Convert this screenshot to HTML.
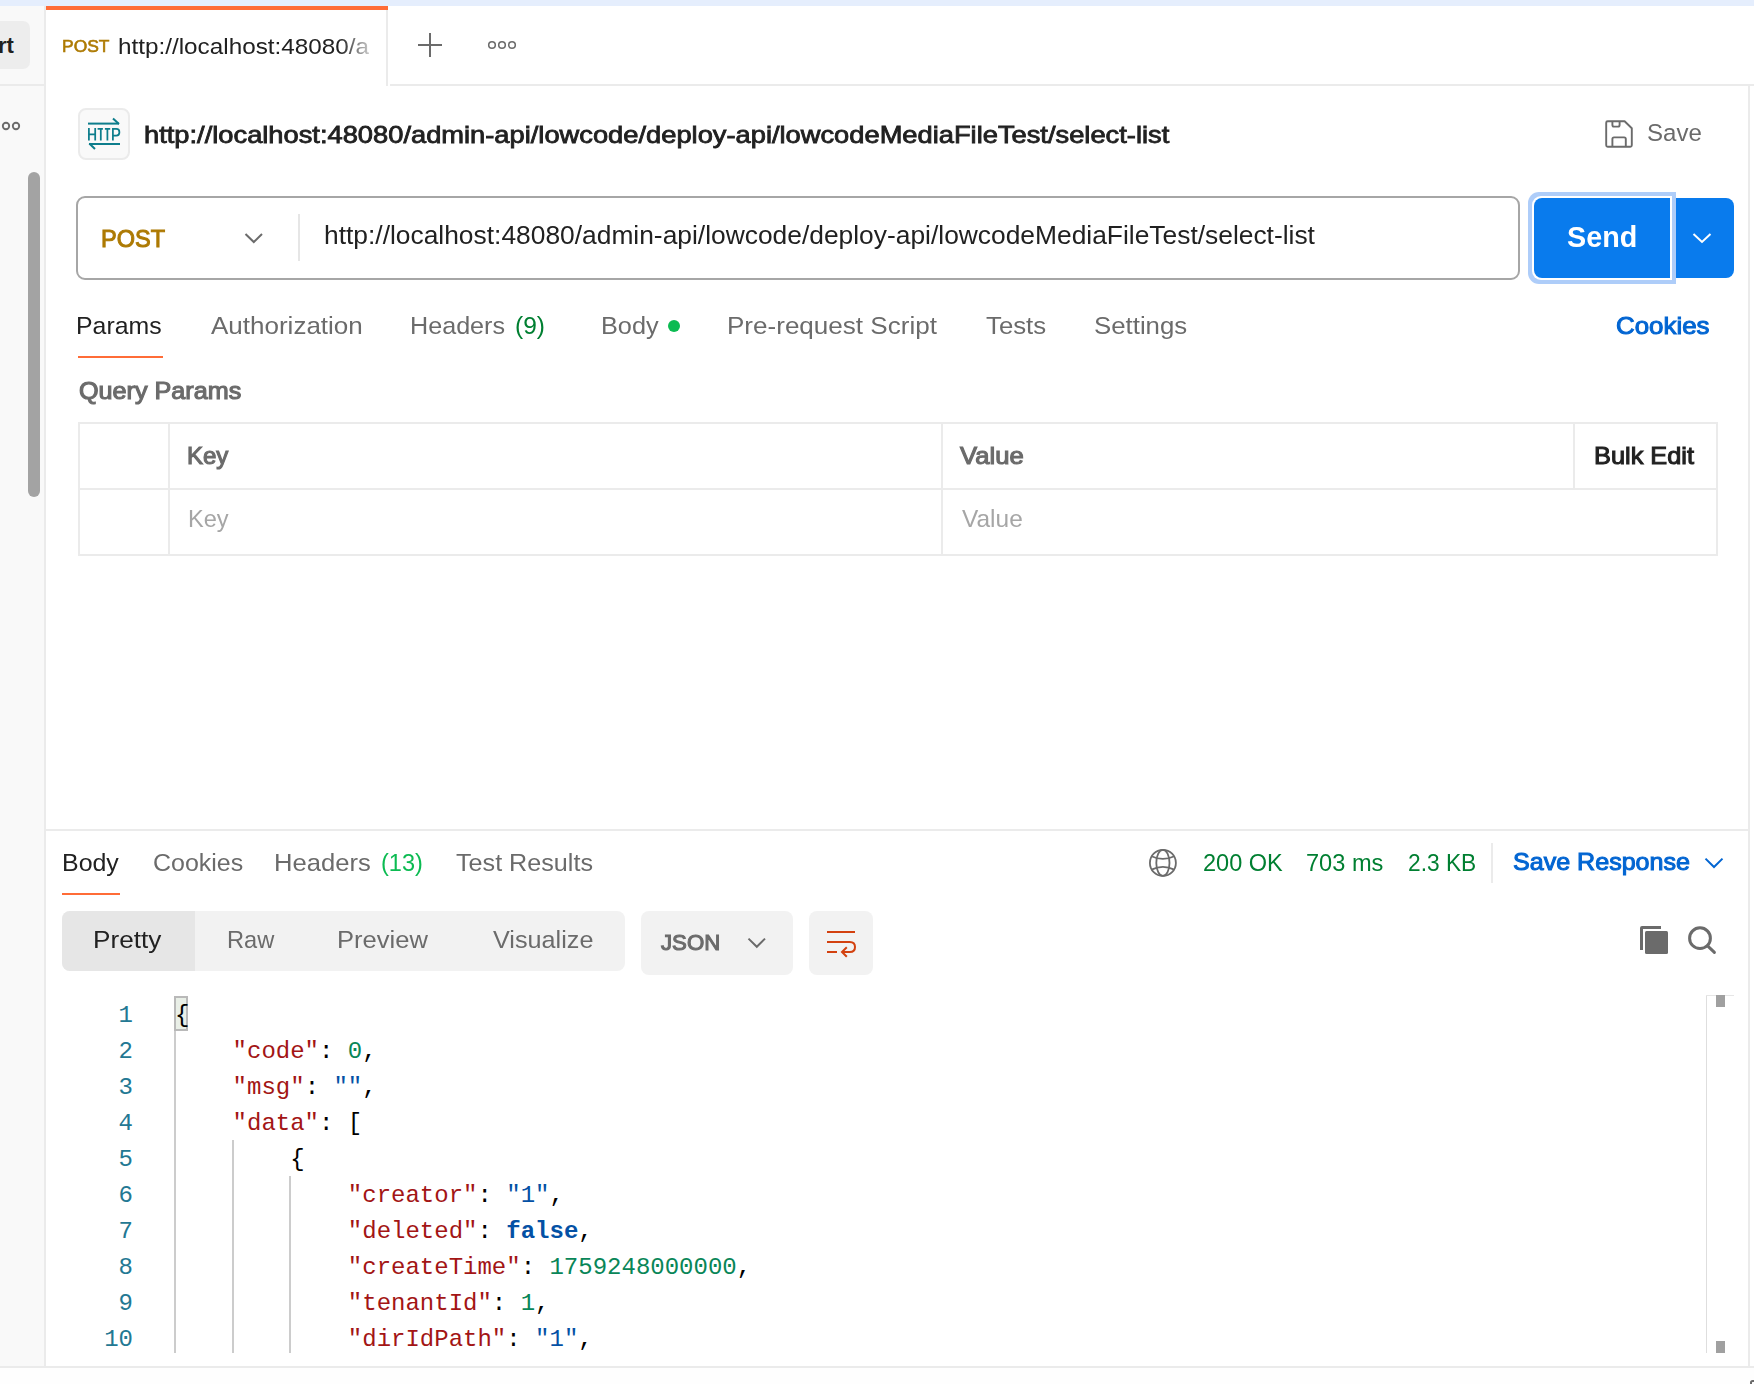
<!DOCTYPE html>
<html><head><meta charset="utf-8"><title>Postman</title>
<style>
html,body{margin:0;padding:0}
body{width:1754px;height:1384px;overflow:hidden;position:relative;background:#fff;font-family:'Liberation Sans', sans-serif}
body>div,body>svg{position:absolute}
b{font-weight:700}
</style></head><body>
<div style="left:0px;top:0px;width:1754px;height:6px;background:#e5eefd"></div>
<div style="left:0px;top:6px;width:44px;height:1360px;background:#f9f9f9"></div>
<div style="left:44px;top:6px;width:2px;height:1362px;background:#ebebeb"></div>
<div style="left:0px;top:84px;width:44px;height:2px;background:#ebebeb"></div>
<div style="left:-20px;top:21px;width:50px;height:48px;background:#ededed;border-radius:7px"></div>
<div style="left:-2.00px;top:34.72px;font-family:'Liberation Sans', sans-serif;font-size:22px;line-height:22px;color:#212121;font-weight:700;letter-spacing:0px;white-space:pre;">rt</div>
<svg style="left:0;top:118px" width="30" height="16"><circle cx="6" cy="8" r="3.2" fill="none" stroke="#6b6b6b" stroke-width="1.9"/><circle cx="16" cy="8" r="3.2" fill="none" stroke="#6b6b6b" stroke-width="1.9"/></svg>
<div style="left:28px;top:172px;width:12px;height:325px;background:#a3a3a3;border-radius:6px"></div>
<div style="left:46px;top:6px;width:342px;height:4px;background:#ff6c37"></div>
<div style="left:386px;top:10px;width:2px;height:76px;background:#ebebeb"></div>
<div style="left:390px;top:84px;width:1364px;height:2px;background:#ebebeb"></div>
<div style="left:61.79px;top:38.27px;font-family:'Liberation Sans', sans-serif;font-size:17.3px;line-height:17.3px;color:#ad7a03;font-weight:400;white-space:pre;transform-origin:0 0;transform:scaleX(1.0087);-webkit-text-stroke:0.6px #ad7a03;">POST</div>
<div style="left:117.52px;top:36.08px;font-family:'Liberation Sans', sans-serif;font-size:22.4px;line-height:22.4px;color:#212121;font-weight:400;white-space:pre;transform-origin:0 0;transform:scaleX(1.0840);-webkit-mask-image:linear-gradient(to right,#000 205px,transparent 240px);">http://localhost:48080/a</div>
<svg style="left:416px;top:31px" width="28" height="28"><path d="M14 2V26M2 14H26" stroke="#6b6b6b" stroke-width="2" fill="none"/></svg>
<svg style="left:482px;top:37px" width="40" height="16"><g fill="none" stroke="#6b6b6b" stroke-width="1.55"><circle cx="10" cy="8" r="3.3"/><circle cx="20" cy="8" r="3.3"/><circle cx="30" cy="8" r="3.3"/></g></svg>
<div style="left:1748px;top:86px;width:2px;height:1282px;background:#ebebeb"></div>
<div style="left:78px;top:108px;width:52px;height:52px;background:#f9f9f9;border:2px solid #ebebeb;border-radius:8px;box-sizing:border-box"></div>
<svg style="left:75px;top:105px" width="60" height="60" viewBox="75 105 60 60"><g fill="none" stroke="#0d7d8c" stroke-width="2" stroke-linecap="butt"><path d="M88 123.6H119"/><path d="M113 118.6L119 124"/><path d="M89 144H120"/><path d="M89.3 143.6L95 149"/><g stroke-width="1.75"><path d="M88.9 128V140.5M95.2 128V140.5M88.9 134.4H95.2"/><path d="M97.6 128.9H102.9M100.8 128.9V140.5"/><path d="M104.9 128.9H110.2M107.4 128.9V140.5"/><path d="M112.9 140.5V128.9H116.3Q119.4 128.9 119.4 132.2Q119.4 135.5 116.3 135.5H112.9"/></g></g></svg>
<div style="left:144.02px;top:123.51px;font-family:'Liberation Sans', sans-serif;font-size:23.2px;line-height:23.2px;color:#212121;font-weight:400;white-space:pre;transform-origin:0 0;transform:scaleX(1.1767);-webkit-text-stroke:0.8px #212121;">http://localhost:48080/admin-api/lowcode/deploy-api/lowcodeMediaFileTest/select-list</div>
<svg style="left:1600px;top:115px" width="38" height="38" viewBox="1600 115 38 38"><g fill="none" stroke="#6b6b6b" stroke-width="1.9" stroke-linejoin="round"><path d="M1607.7 121.2H1624.6L1631.8 128.2V145.3Q1631.8 146.8 1630.3 146.8H1607.7Q1606.2 146.8 1606.2 145.3V122.7Q1606.2 121.2 1607.7 121.2Z"/><path d="M1612.4 121.2V125Q1612.4 126.6 1614 126.6H1618Q1619.6 126.6 1619.6 125V121.2"/><path d="M1612.4 146.8V139Q1612.4 137.4 1614 137.4H1624.2Q1625.8 137.4 1625.8 139V146.8"/></g></svg>
<div style="left:1647.18px;top:121.79px;font-family:'Liberation Sans', sans-serif;font-size:23.7px;line-height:23.7px;color:#6b6b6b;font-weight:400;white-space:pre;transform-origin:0 0;transform:scaleX(1.0154);">Save</div>
<div style="left:76px;top:196px;width:1444px;height:84px;border:2px solid #a6a6a6;border-radius:9px;box-sizing:border-box;background:#fff"></div>
<div style="left:100.53px;top:227.19px;font-family:'Liberation Sans', sans-serif;font-size:24.3px;line-height:24.3px;color:#ad7a03;font-weight:400;white-space:pre;transform-origin:0 0;transform:scaleX(0.9677);-webkit-text-stroke:1.0px #ad7a03;">POST</div>
<svg style="left:240px;top:228px" width="28" height="20"><path d="M5.5 6L13.8 14L22 6" fill="none" stroke="#6b6b6b" stroke-width="2"/></svg>
<div style="left:298px;top:214px;width:2px;height:47px;background:#e6e6e6"></div>
<div style="left:323.62px;top:222.75px;font-family:'Liberation Sans', sans-serif;font-size:25.3px;line-height:25.3px;color:#212121;font-weight:400;white-space:pre;transform-origin:0 0;transform:scaleX(1.0425);">http://localhost:48080/admin-api/lowcode/deploy-api/lowcodeMediaFileTest/select-list</div>
<div style="left:1528px;top:192px;width:148px;height:92px;background:#aecdf9;border-radius:11px 0 0 11px"></div>
<div style="left:1532px;top:196px;width:140px;height:84px;background:#fff;border-radius:9px 0 0 9px"></div>
<div style="left:1534px;top:198px;width:136px;height:80px;background:#097bed;border-radius:8px 0 0 8px"></div>
<div style="left:1676px;top:198px;width:58px;height:80px;background:#097bed;border-radius:0 8px 8px 0"></div>
<div style="left:1567.01px;top:223.04px;font-family:'Liberation Sans', sans-serif;font-size:29px;line-height:29px;color:#fff;font-weight:700;white-space:pre;transform-origin:0 0;transform:scaleX(0.9912);">Send</div>
<svg style="left:1690px;top:228px" width="26" height="20"><path d="M3.5 6L12 14L20.5 6" fill="none" stroke="#fff" stroke-width="2"/></svg>
<div style="left:76.46px;top:313.50px;font-family:'Liberation Sans', sans-serif;font-size:24.4px;line-height:24.4px;color:#212121;font-weight:400;white-space:pre;transform-origin:0 0;transform:scaleX(1.0185);">Params</div>
<div style="left:211.00px;top:313.50px;font-family:'Liberation Sans', sans-serif;font-size:24.4px;line-height:24.4px;color:#6b6b6b;font-weight:400;white-space:pre;transform-origin:0 0;transform:scaleX(1.0660);">Authorization</div>
<div style="left:409.84px;top:313.50px;font-family:'Liberation Sans', sans-serif;font-size:24.4px;line-height:24.4px;color:#6b6b6b;font-weight:400;white-space:pre;transform-origin:0 0;transform:scaleX(1.0311);">Headers</div>
<div style="left:600.93px;top:313.50px;font-family:'Liberation Sans', sans-serif;font-size:24.4px;line-height:24.4px;color:#6b6b6b;font-weight:400;white-space:pre;transform-origin:0 0;transform:scaleX(1.0370);">Body</div>
<div style="left:727.26px;top:313.50px;font-family:'Liberation Sans', sans-serif;font-size:24.4px;line-height:24.4px;color:#6b6b6b;font-weight:400;white-space:pre;transform-origin:0 0;transform:scaleX(1.0680);">Pre-request Script</div>
<div style="left:985.80px;top:313.50px;font-family:'Liberation Sans', sans-serif;font-size:24.4px;line-height:24.4px;color:#6b6b6b;font-weight:400;white-space:pre;transform-origin:0 0;transform:scaleX(1.0571);">Tests</div>
<div style="left:1093.94px;top:313.50px;font-family:'Liberation Sans', sans-serif;font-size:24.4px;line-height:24.4px;color:#6b6b6b;font-weight:400;white-space:pre;transform-origin:0 0;transform:scaleX(1.0575);">Settings</div>
<div style="left:515.10px;top:313.50px;font-family:'Liberation Sans', sans-serif;font-size:24.4px;line-height:24.4px;color:#007f31;font-weight:400;white-space:pre;transform-origin:0 0;transform:scaleX(1.0036);">(9)</div>
<svg style="left:664px;top:316px" width="20" height="20"><circle cx="10" cy="10" r="6" fill="#0cbb52"/></svg>
<div style="left:1616.00px;top:314.68px;font-family:'Liberation Sans', sans-serif;font-size:23.6px;line-height:23.6px;color:#0265d2;font-weight:400;white-space:pre;transform-origin:0 0;transform:scaleX(1.0964);-webkit-text-stroke:1.0px #0265d2;">Cookies</div>
<div style="left:78px;top:356px;width:85px;height:2px;background:#ff6c37"></div>
<div style="left:78.50px;top:380.14px;font-family:'Liberation Sans', sans-serif;font-size:23.4px;line-height:23.4px;color:#6b6b6b;font-weight:400;white-space:pre;transform-origin:0 0;transform:scaleX(1.0762);-webkit-text-stroke:1.1px #6b6b6b;">Query Params</div>
<div style="left:78px;top:422px;width:1640px;height:134px;border:2px solid #ebebeb;box-sizing:border-box"></div>
<div style="left:78px;top:488px;width:1640px;height:2px;background:#ebebeb"></div>
<div style="left:168px;top:422px;width:2px;height:134px;background:#ebebeb"></div>
<div style="left:941px;top:422px;width:2px;height:134px;background:#ebebeb"></div>
<div style="left:1573px;top:422px;width:2px;height:68px;background:#ebebeb"></div>
<div style="left:186.58px;top:444.98px;font-family:'Liberation Sans', sans-serif;font-size:23.6px;line-height:23.6px;color:#6b6b6b;font-weight:400;white-space:pre;transform-origin:0 0;transform:scaleX(1.0175);-webkit-text-stroke:1.1px #6b6b6b;">Key</div>
<div style="left:959.90px;top:444.98px;font-family:'Liberation Sans', sans-serif;font-size:23.6px;line-height:23.6px;color:#6b6b6b;font-weight:400;white-space:pre;transform-origin:0 0;transform:scaleX(1.0862);-webkit-text-stroke:1.1px #6b6b6b;">Value</div>
<div style="left:1594.43px;top:444.98px;font-family:'Liberation Sans', sans-serif;font-size:23.6px;line-height:23.6px;color:#212121;font-weight:400;white-space:pre;transform-origin:0 0;transform:scaleX(1.0742);-webkit-text-stroke:1.0px #212121;">Bulk Edit</div>
<div style="left:188.16px;top:506.50px;font-family:'Liberation Sans', sans-serif;font-size:24.4px;line-height:24.4px;color:#a6a6a6;font-weight:400;white-space:pre;transform-origin:0 0;transform:scaleX(0.9675);">Key</div>
<div style="left:961.80px;top:506.50px;font-family:'Liberation Sans', sans-serif;font-size:24.4px;line-height:24.4px;color:#a6a6a6;font-weight:400;white-space:pre;transform-origin:0 0;transform:scaleX(1.0033);">Value</div>
<div style="left:46px;top:829px;width:1702px;height:2px;background:#ebebeb"></div>
<div style="left:61.86px;top:850.50px;font-family:'Liberation Sans', sans-serif;font-size:24.4px;line-height:24.4px;color:#212121;font-weight:400;white-space:pre;transform-origin:0 0;transform:scaleX(1.0222);">Body</div>
<div style="left:152.58px;top:850.50px;font-family:'Liberation Sans', sans-serif;font-size:24.4px;line-height:24.4px;color:#6b6b6b;font-weight:400;white-space:pre;transform-origin:0 0;transform:scaleX(1.0230);">Cookies</div>
<div style="left:274.30px;top:850.50px;font-family:'Liberation Sans', sans-serif;font-size:24.4px;line-height:24.4px;color:#6b6b6b;font-weight:400;white-space:pre;transform-origin:0 0;transform:scaleX(1.0489);">Headers</div>
<div style="left:380.53px;top:850.50px;font-family:'Liberation Sans', sans-serif;font-size:24.4px;line-height:24.4px;color:#0cbb52;font-weight:400;white-space:pre;transform-origin:0 0;transform:scaleX(0.9659);">(13)</div>
<div style="left:456.00px;top:850.50px;font-family:'Liberation Sans', sans-serif;font-size:24.4px;line-height:24.4px;color:#6b6b6b;font-weight:400;white-space:pre;transform-origin:0 0;transform:scaleX(1.0311);">Test Results</div>
<div style="left:62px;top:893px;width:58px;height:2px;background:#ff6c37"></div>
<svg style="left:1145px;top:845px" width="36" height="36" viewBox="1145 845 36 36"><g fill="none" stroke="#6b6b6b" stroke-width="1.8"><circle cx="1162.9" cy="862.9" r="13"/><ellipse cx="1162.9" cy="862.9" rx="6.6" ry="13"/><path d="M1151.5 856.2Q1162.9 861.6 1174.3 856.2"/><path d="M1151.5 869.6Q1162.9 864.2 1174.3 869.6"/></g></svg>
<div style="left:1202.80px;top:852.26px;font-family:'Liberation Sans', sans-serif;font-size:23.5px;line-height:23.5px;color:#007f31;font-weight:400;white-space:pre;transform-origin:0 0;transform:scaleX(1.0013);">200 OK</div>
<div style="left:1306.20px;top:852.26px;font-family:'Liberation Sans', sans-serif;font-size:23.5px;line-height:23.5px;color:#007f31;font-weight:400;white-space:pre;transform-origin:0 0;transform:scaleX(1.0040);">703 ms</div>
<div style="left:1407.53px;top:852.26px;font-family:'Liberation Sans', sans-serif;font-size:23.5px;line-height:23.5px;color:#007f31;font-weight:400;white-space:pre;transform-origin:0 0;transform:scaleX(0.9676);">2.3 KB</div>
<div style="left:1491px;top:843px;width:2px;height:40px;background:#ebebeb"></div>
<div style="left:1513.04px;top:851.18px;font-family:'Liberation Sans', sans-serif;font-size:23.6px;line-height:23.6px;color:#0265d2;font-weight:400;white-space:pre;transform-origin:0 0;transform:scaleX(1.0624);-webkit-text-stroke:1.0px #0265d2;">Save Response</div>
<svg style="left:1700px;top:850px" width="28" height="24"><path d="M5.5 8.6L14 17L22.5 8.6" fill="none" stroke="#0265d2" stroke-width="2"/></svg>
<div style="left:62px;top:911px;width:563px;height:60px;background:#f2f2f2;border-radius:8px"></div>
<div style="left:62px;top:911px;width:133px;height:60px;background:#e6e6e6;border-radius:8px 0 0 8px"></div>
<div style="left:92.85px;top:928.30px;font-family:'Liberation Sans', sans-serif;font-size:24.4px;line-height:24.4px;color:#212121;font-weight:400;white-space:pre;transform-origin:0 0;transform:scaleX(1.0726);">Pretty</div>
<div style="left:226.56px;top:928.30px;font-family:'Liberation Sans', sans-serif;font-size:24.4px;line-height:24.4px;color:#6b6b6b;font-weight:400;white-space:pre;transform-origin:0 0;transform:scaleX(0.9702);">Raw</div>
<div style="left:337.21px;top:928.30px;font-family:'Liberation Sans', sans-serif;font-size:24.4px;line-height:24.4px;color:#6b6b6b;font-weight:400;white-space:pre;transform-origin:0 0;transform:scaleX(1.0471);">Preview</div>
<div style="left:493.30px;top:928.30px;font-family:'Liberation Sans', sans-serif;font-size:24.4px;line-height:24.4px;color:#6b6b6b;font-weight:400;white-space:pre;transform-origin:0 0;transform:scaleX(1.0333);">Visualize</div>
<div style="left:641px;top:911px;width:152px;height:64px;background:#f2f2f2;border-radius:8px"></div>
<div style="left:661.40px;top:932.32px;font-family:'Liberation Sans', sans-serif;font-size:22.6px;line-height:22.6px;color:#6b6b6b;font-weight:400;white-space:pre;transform-origin:0 0;transform:scaleX(0.9831);-webkit-text-stroke:1.1px #6b6b6b;">JSON</div>
<svg style="left:744px;top:932px" width="28" height="22"><path d="M4.5 6.6L12.8 14.8L21 6.6" fill="none" stroke="#6b6b6b" stroke-width="2"/></svg>
<div style="left:809px;top:911px;width:64px;height:64px;background:#f2f2f2;border-radius:8px"></div>
<svg style="left:809px;top:911px" width="64" height="64" viewBox="809 911 64 64"><g fill="none" stroke="#d3410f" stroke-width="2"><path d="M827 932H855"/><path d="M827 942H849.8Q855 942 855 947Q855 952 849.8 952H842.5"/><path d="M846.8 947.3L842 952L846.8 956.8"/><path d="M827 952H837"/></g></svg>
<svg style="left:1636px;top:922px" width="36" height="36" viewBox="1636 922 36 36"><g fill="#6b6b6b"><path d="M1640 934V928Q1640 926 1642 926H1661V929H1643V950H1640Z"/><rect x="1645" y="931" width="23" height="23" rx="1.5"/></g></svg>
<svg style="left:1682px;top:920px" width="40" height="40" viewBox="1682 920 40 40"><g fill="none" stroke="#6b6b6b" stroke-width="3" stroke-linecap="round"><circle cx="1700" cy="938.2" r="10.4"/><path d="M1707.6 945.8L1714.4 952.4"/></g></svg>
<div style="left:174px;top:995.5px;width:14px;height:35px;background:#e9efe7;border:2px solid #b9b9b9;box-sizing:border-box"></div>
<div style="left:118.60px;top:1004.02px;font-family:'Liberation Mono', monospace;font-size:24px;line-height:24px;color:#237893;font-weight:400;letter-spacing:0px;white-space:pre;">1</div>
<div style="left:175.00px;top:1004.02px;font-family:'Liberation Mono', monospace;font-size:24px;line-height:24px;color:#000000;font-weight:400;letter-spacing:0px;white-space:pre;"><span style="color:#000000">{</span></div>
<div style="left:118.60px;top:1040.02px;font-family:'Liberation Mono', monospace;font-size:24px;line-height:24px;color:#237893;font-weight:400;letter-spacing:0px;white-space:pre;">2</div>
<div style="left:175.00px;top:1040.02px;font-family:'Liberation Mono', monospace;font-size:24px;line-height:24px;color:#000000;font-weight:400;letter-spacing:0px;white-space:pre;"><span style="color:#000000">    </span><span style="color:#a31515">"code"</span><span style="color:#000000">: </span><span style="color:#098658">0</span><span style="color:#000000">,</span></div>
<div style="left:118.60px;top:1076.02px;font-family:'Liberation Mono', monospace;font-size:24px;line-height:24px;color:#237893;font-weight:400;letter-spacing:0px;white-space:pre;">3</div>
<div style="left:175.00px;top:1076.02px;font-family:'Liberation Mono', monospace;font-size:24px;line-height:24px;color:#000000;font-weight:400;letter-spacing:0px;white-space:pre;"><span style="color:#000000">    </span><span style="color:#a31515">"msg"</span><span style="color:#000000">: </span><span style="color:#0451a5">""</span><span style="color:#000000">,</span></div>
<div style="left:118.60px;top:1112.02px;font-family:'Liberation Mono', monospace;font-size:24px;line-height:24px;color:#237893;font-weight:400;letter-spacing:0px;white-space:pre;">4</div>
<div style="left:175.00px;top:1112.02px;font-family:'Liberation Mono', monospace;font-size:24px;line-height:24px;color:#000000;font-weight:400;letter-spacing:0px;white-space:pre;"><span style="color:#000000">    </span><span style="color:#a31515">"data"</span><span style="color:#000000">: </span><span style="color:#000000">[</span></div>
<div style="left:118.60px;top:1148.02px;font-family:'Liberation Mono', monospace;font-size:24px;line-height:24px;color:#237893;font-weight:400;letter-spacing:0px;white-space:pre;">5</div>
<div style="left:175.00px;top:1148.02px;font-family:'Liberation Mono', monospace;font-size:24px;line-height:24px;color:#000000;font-weight:400;letter-spacing:0px;white-space:pre;"><span style="color:#000000">        </span><span style="color:#000000">{</span></div>
<div style="left:118.60px;top:1184.02px;font-family:'Liberation Mono', monospace;font-size:24px;line-height:24px;color:#237893;font-weight:400;letter-spacing:0px;white-space:pre;">6</div>
<div style="left:175.00px;top:1184.02px;font-family:'Liberation Mono', monospace;font-size:24px;line-height:24px;color:#000000;font-weight:400;letter-spacing:0px;white-space:pre;"><span style="color:#000000">            </span><span style="color:#a31515">"creator"</span><span style="color:#000000">: </span><span style="color:#0451a5">"1"</span><span style="color:#000000">,</span></div>
<div style="left:118.60px;top:1220.02px;font-family:'Liberation Mono', monospace;font-size:24px;line-height:24px;color:#237893;font-weight:400;letter-spacing:0px;white-space:pre;">7</div>
<div style="left:175.00px;top:1220.02px;font-family:'Liberation Mono', monospace;font-size:24px;line-height:24px;color:#000000;font-weight:400;letter-spacing:0px;white-space:pre;"><span style="color:#000000">            </span><span style="color:#a31515">"deleted"</span><span style="color:#000000">: </span><span style="color:#0451a5"><b>false</b></span><span style="color:#000000">,</span></div>
<div style="left:118.60px;top:1256.02px;font-family:'Liberation Mono', monospace;font-size:24px;line-height:24px;color:#237893;font-weight:400;letter-spacing:0px;white-space:pre;">8</div>
<div style="left:175.00px;top:1256.02px;font-family:'Liberation Mono', monospace;font-size:24px;line-height:24px;color:#000000;font-weight:400;letter-spacing:0px;white-space:pre;"><span style="color:#000000">            </span><span style="color:#a31515">"createTime"</span><span style="color:#000000">: </span><span style="color:#098658">1759248000000</span><span style="color:#000000">,</span></div>
<div style="left:118.60px;top:1292.02px;font-family:'Liberation Mono', monospace;font-size:24px;line-height:24px;color:#237893;font-weight:400;letter-spacing:0px;white-space:pre;">9</div>
<div style="left:175.00px;top:1292.02px;font-family:'Liberation Mono', monospace;font-size:24px;line-height:24px;color:#000000;font-weight:400;letter-spacing:0px;white-space:pre;"><span style="color:#000000">            </span><span style="color:#a31515">"tenantId"</span><span style="color:#000000">: </span><span style="color:#098658">1</span><span style="color:#000000">,</span></div>
<div style="left:104.20px;top:1328.02px;font-family:'Liberation Mono', monospace;font-size:24px;line-height:24px;color:#237893;font-weight:400;letter-spacing:0px;white-space:pre;">10</div>
<div style="left:175.00px;top:1328.02px;font-family:'Liberation Mono', monospace;font-size:24px;line-height:24px;color:#000000;font-weight:400;letter-spacing:0px;white-space:pre;"><span style="color:#000000">            </span><span style="color:#a31515">"dirIdPath"</span><span style="color:#000000">: </span><span style="color:#0451a5">"1"</span><span style="color:#000000">,</span></div>
<div style="left:174px;top:1030.5px;width:2px;height:322.5px;background:#cccccc"></div>
<div style="left:232px;top:1140px;width:2px;height:213px;background:#cccccc"></div>
<div style="left:289px;top:1176px;width:2px;height:177px;background:#cccccc"></div>
<div style="left:1706px;top:995px;width:1px;height:358px;background:#dedede"></div>
<div style="left:1706px;top:995px;width:28px;height:1px;background:#e6e6e6"></div>
<div style="left:1716px;top:995px;width:9px;height:12px;background:#a0a0a0"></div>
<div style="left:1716px;top:1341px;width:9px;height:12px;background:#a0a0a0"></div>
<div style="left:0px;top:1366px;width:1754px;height:2px;background:#ebebeb"></div>
<div style="left:0px;top:1368px;width:1754px;height:16px;background:#fefefe"></div>
<svg style="left:1740px;top:1370px" width="14" height="14" viewBox="1740 1370 14 14"><path d="M1751 1384V1382.6Q1751 1381 1752.6 1381H1754" fill="none" stroke="#6b6b6b" stroke-width="2"/></svg>
</body></html>
